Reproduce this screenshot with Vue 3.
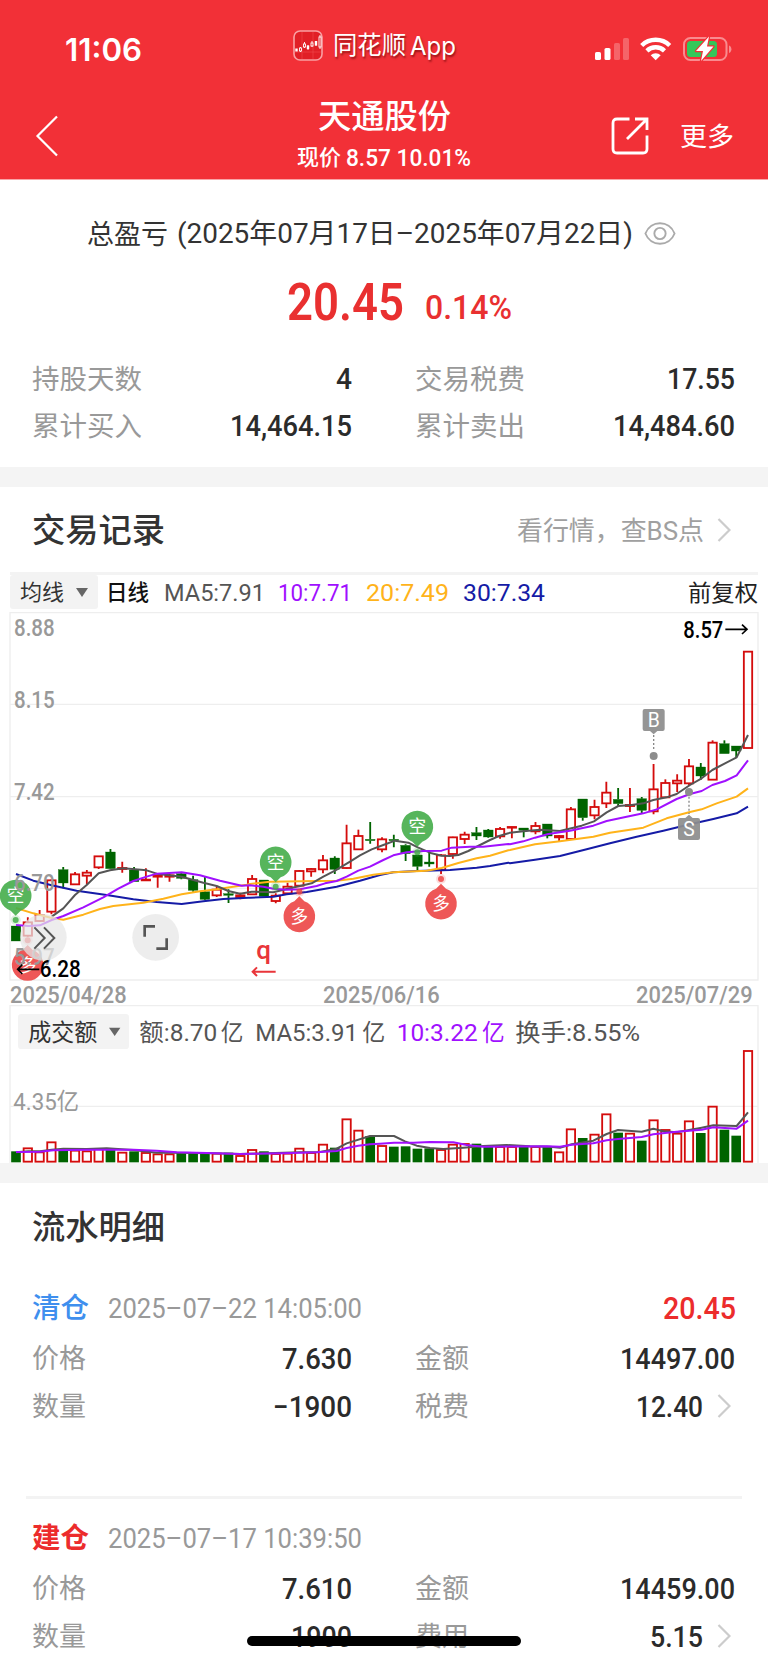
<script setup>
import { h } from 'vue'

// One line of text set to an exact width; its box is one em high.
const Fit = (p) =>
  h('svg', { class: 'fit', width: p.w, height: p.s, style: { overflow: 'visible', display: 'block', flex: 'none' } }, [
    h('text', {
      x: 0, y: p.s * 0.87, 'font-size': p.s, 'font-weight': p.b || 400, fill: 'currentColor',
      textLength: p.w, lengthAdjust: 'spacingAndGlyphs'
    }, p.t)
  ])
Fit.props = ['t', 'w', 's', 'b']

// Price bars: [up, high, bodyTop, bodyBottom, low], three units per pixel.
const early = [
  [0, 438, 438, 483, 483], [1, 412, 427, 467, 470], [1, 390, 405, 423, 425], [1, 298, 301, 395, 403],
  [0, 261, 269, 309, 325], [1, 276, 283, 313, 313], [1, 270, 278, 287, 312], [1, 229, 229, 262, 267],
  [0, 207, 216, 266, 268], [1, 245, 264, 267, 278], [0, 261, 270, 305, 305], [1, 265, 299, 301, 303],
  [1, 286, 287, 290, 323], [1, 281, 286, 290, 305], [0, 278, 281, 295, 298], [0, 287, 299, 331, 335],
  [0, 290, 335, 358, 360], [1, 320, 329, 346, 351], [0, 328, 341, 346, 369], [1, 338, 346, 351, 358],
  [1, 285, 297, 343, 343], [0, 300, 300, 349, 349], [1, 340, 347, 363, 370], [1, 308, 320, 340, 343],
  [1, 270, 273, 317, 320], [1, 265, 267, 274, 290], [1, 225, 241, 268, 280], [0, 229, 234, 268, 282],
  [1, 134, 190, 264, 266], [1, 149, 168, 208, 208], [0, 126, 178, 182, 191], [1, 172, 178, 208, 217],
  [0, 164, 178, 182, 202], [0, 193, 196, 221, 243], [0, 225, 225, 259, 270], [0, 213, 246, 252, 260],
  [1, 222, 226, 270, 282], [1, 170, 172, 222, 236], [1, 155, 164, 177, 192], [0, 141, 158, 168, 180],
  [0, 147, 150, 171, 173], [1, 141, 147, 169, 176]
].map(([u, ...v]) => [u, ...v.map((n) => n + 510)])
const late = [
  [1, 650, 651, 653, 685], [0, 654, 654, 661, 682], [1, 636, 648, 664, 673], [0, 642, 642, 678, 685],
  [1, 675, 678, 682, 693], [1, 591, 598, 687, 687], [0, 567, 567, 623, 632], [1, 569, 591, 616, 628],
  [1, 515, 548, 580, 594], [0, 534, 568, 581, 588], [1, 534, 585, 588, 606], [0, 561, 566, 601, 612],
  [1, 462, 538, 604, 613], [1, 508, 519, 562, 562], [1, 493, 512, 520, 546], [1, 447, 469, 520, 526],
  [0, 459, 471, 498, 509], [1, 391, 398, 509, 509], [0, 391, 401, 431, 431], [0, 408, 408, 423, 442],
  [1, 124, 125, 414, 414]
]
const barX = (i) => 48 + i * 35.42
const candles = [...early, ...late].map(([up, hi, top, bot, lo], i) => ({ up, hi, top, bot, lo, x: barX(i) }))

const turnover = [
  514, 505, 517, 487, 513, 512, 514, 507, 507, 518, 514, 519, 523, 523, 518, 518, 518, 521, 518, 528, 510,
  514, 522, 521, 506, 519, 494, 503, 418, 452, 468, 498, 500, 499, 506, 505, 510, 494, 492, 491, 501, 501,
  501, 501, 501, 501, 517, 448, 474, 464, 403, 458, 461, 482, 421, 450, 461, 424, 459, 380, 449, 467, 213
].map((y, i) => ({ y: y + 1110, x: barX(i), up: candles[i].up }))

const join = (...parts) =>
  'M' + parts.flatMap(([dx, dy, ...xy]) => {
    const out = []
    for (let i = 0; i < xy.length; i += 2) out.push(`${xy[i] + dx},${xy[i + 1] + dy}`)
    return out
  }).join('L')

const lines = [
  { c: '#151ba6', d: join(
    [0, 510, 48, 282, 100, 302, 155, 316, 230, 332, 320, 345, 400, 358, 470, 366, 545, 372, 610, 364, 670, 357, 745, 353],
    [750, 510, 0, 353, 70, 350, 110, 343, 170, 336, 260, 320, 330, 302, 390, 285, 430, 277, 500, 273, 600, 270, 680, 263, 720, 258, 775, 248],
    [1530, 0, 0, 760, 75, 749, 150, 738, 230, 718, 300, 700, 380, 680, 460, 662, 540, 643, 610, 627, 680, 610, 714, 590]) },
  { c: '#ffb31a', d: join(
    [0, 510, 48, 384, 100, 400, 155, 414, 190, 419, 250, 404, 300, 387, 340, 378, 430, 368, 490, 356, 545, 343, 600, 334, 650, 328, 740, 314],
    [750, 510, 0, 312, 60, 305, 150, 304, 260, 302, 310, 296, 370, 284, 430, 277, 530, 272, 575, 264, 625, 249, 680, 235, 720, 227, 775, 211],
    [1530, 0, 0, 720, 75, 703, 150, 694, 250, 680, 300, 668, 400, 653, 470, 625, 540, 606, 575, 598, 620, 580, 680, 560, 714, 535]) },
  { c: '#555', d: join(
    [0, 510, 155, 410, 190, 385, 225, 345, 260, 315, 296, 280, 330, 271, 370, 265, 440, 271, 470, 281, 545, 290, 610, 308, 650, 318, 685, 333, 720, 341],
    [750, 510, 5, 335, 70, 337, 110, 327, 150, 318, 185, 310, 220, 290, 255, 272, 300, 245, 330, 226, 365, 208, 400, 195, 435, 182, 475, 188, 505, 203, 545, 220, 575, 227, 600, 228, 625, 225, 655, 213, 690, 195, 720, 180, 750, 167, 775, 160],
    [1530, 0, 0, 668, 40, 664, 90, 659, 150, 663, 215, 647, 252, 634, 290, 607, 325, 588, 365, 585, 400, 580, 430, 570, 470, 562, 500, 552, 540, 525, 575, 505, 607, 480, 645, 460, 680, 442, 714, 375]) },
  { c: '#a010ff', d: join(
    [0, 510, 48, 435, 85, 438, 120, 436, 155, 420, 190, 408, 250, 382, 310, 352, 355, 326, 400, 303, 440, 290, 470, 281, 545, 277, 600, 286, 660, 302, 725, 317],
    [750, 510, 0, 316, 40, 320, 70, 326, 110, 329, 150, 328, 200, 318, 225, 310, 260, 303, 290, 290, 325, 272, 360, 260, 400, 240, 430, 226, 470, 217, 520, 213, 575, 212, 605, 203, 660, 200, 700, 200, 775, 192],
    [1530, 0, 0, 703, 40, 694, 75, 683, 115, 672, 180, 662, 250, 647, 290, 633, 350, 620, 400, 610, 440, 598, 500, 567, 540, 552, 575, 543, 607, 525, 645, 513, 680, 496, 714, 451]) },
  { c: '#555', d: join(
    [0, 1110, 48, 517, 85, 514, 120, 514, 155, 509, 190, 506, 260, 507, 320, 505, 400, 510, 470, 518, 520, 518, 640, 520, 720, 522, 800, 520, 900, 517, 960, 516, 1010, 506, 1040, 490, 1110, 468],
    [1140, 1110, 0, 468, 42, 468, 75, 484, 110, 497, 150, 504, 190, 507, 250, 503, 310, 498, 380, 495, 450, 499, 510, 500, 540, 503, 575, 493, 640, 482, 680, 462, 714, 450, 785, 455, 820, 446, 850, 454, 890, 457, 965, 443, 1000, 436, 1070, 438, 1104, 397]) },
  { c: '#a010ff', d: join(
    [0, 1110, 48, 516, 120, 515, 160, 511, 260, 509, 400, 509, 470, 512, 530, 517, 620, 519, 720, 522, 850, 520, 950, 517, 1010, 513, 1040, 504, 1075, 497, 1110, 493],
    [1140, 1110, 0, 491, 42, 488, 100, 488, 150, 486, 220, 487, 260, 495, 310, 500, 500, 499, 540, 500, 575, 494, 640, 490, 680, 481, 714, 477, 785, 471, 820, 463, 890, 455, 965, 449, 1000, 442, 1070, 446, 1104, 422]) }
]

const pins = [
  { t: '空', x: 47, y: 857, dot: 930 }, { t: '空', x: 827, y: 757, dot: 830 }, { t: '空', x: 1252, y: 650, dot: 727 },
  { t: '多', x: 83, y: 1065, dot: 991 }, { t: '多', x: 898, y: 919, dot: 845 }, { t: '多', x: 1323, y: 881, dot: 807 }
]

// Labels inside the chart: text, x, baseline, width, size, colour, weight
const labels = [
  ['8.88', 42, 78, 122, 72, '#999', 500], ['8.15', 42, 294, 122, 72, '#999', 500], ['7.42', 42, 569, 122, 72, '#999', 500],
  ['6.70', 42, 843, 122, 72, '#999', 500], ['5.97', 42, 1064, 122, 72, '#999', 500],
  ['8.57', 2050, 83, 120, 72, '#000', 500],
  ['2025/04/28', 30, 1180, 350, 70, '#999', 500], ['2025/06/16', 969, 1180, 350, 70, '#999', 500], ['2025/07/29', 1908, 1180, 350, 70, '#999', 500],
  ['成交额', 85, 1294, 207, 70, '#333'], ['额:8.70', 418, 1294, 234, 72, '#555'], ['亿', 662, 1294, 68, 70, '#555'],
  ['MA5:3.91', 766, 1294, 308, 72, '#555'], ['亿', 1087, 1294, 69, 70, '#555'],
  ['10:3.22', 1190, 1294, 243, 72, '#a010ff'], ['亿', 1446, 1294, 68, 70, '#a010ff'],
  ['换手:8.55%', 1546, 1294, 374, 72, '#555'], ['4.35亿', 40, 1500, 197, 72, '#999']
]

const entries = [
  { kind: '清仓', cls: 'blue', b: 500, time: '2025-07-22 14:05:00', pnl: '20.45', price: '7.630', amount: '14497.00', aw: 115, qty: '−1900', qw: 79, feeName: '税费', fee: '12.40', fw: 67 },
  { kind: '建仓', cls: 'red', b: 700, time: '2025-07-17 10:39:50', pnl: '', price: '7.610', amount: '14459.00', aw: 115, qty: '1900', qw: 61, feeName: '费用', fee: '5.15', fw: 53 }
]
</script>

<template>
  <main class="screen">
    <header class="top">
      <div class="status">
        <Fit class="time" t="11:06" :w="77" :s="31" :b="600" />
        <div class="app">
          <svg class="appicon" width="30" height="31" viewBox="0 0 30 31">
            <rect x="1" y="1" width="28" height="29" rx="6" fill="#e11f26" stroke="#f9a0a3" stroke-width="1.6" />
            <path d="M9 2V29M20 2V29M2 22H28" stroke="#f04a4e" stroke-width=".6" />
            <g stroke="#fff" stroke-width=".9" fill="none">
              <path d="M7.500 17v1M7.500 21v1M11.500 12v2M11.500 17v1M15 15v5M19 11v2M19 16v1M23 11v5M27 5v2M27 17v2" />
              <path d="M3.500 18.500v3M15 15.500v3.500M23 11v4.500" stroke-width="2.400" />
              <rect x="6.500" y="18" width="2" height="3" /><rect x="10.500" y="14" width="2" height="3" /><rect x="18" y="13" width="2" height="3" /><rect x="26" y="7" width="2" height="10" />
            </g>
          </svg>
          <Fit t="同花顺" :w="73" :s="24.5" />
          <Fit t="App" :w="46" :s="25" />
        </div>
        <svg class="sys" width="138" height="28" viewBox="594 35 138 28">
          <g fill="#fff"><rect x="595" y="52" width="6" height="8" rx="1.6" /><rect x="604.500" y="48" width="6" height="12" rx="1.6" /><rect x="614" y="43" width="6" height="17" rx="1.6" opacity=".25" /><rect x="623" y="38" width="6" height="22" rx="1.600" opacity=".25" /></g>
          <g fill="none" stroke="#fff" stroke-width="4.400"><path d="M641.700 45.500a20 20 0 0 1 28 0" /><path d="M646.900 50.900a12.600 12.600 0 0 1 17.600 0" /></g>
          <path d="M650.700 55.300a7.200 7.200 0 0 1 10 0l-5 4.900z" fill="#fff" />
          <rect x="684" y="38" width="42.500" height="22" rx="6.500" fill="none" stroke="#f98b8f" stroke-width="2" />
          <path d="M729 45.500c3.200 1 3.200 6.500 0 7.500z" fill="#f98b8f" />
          <rect x="687" y="41" width="30" height="16" rx="3.500" fill="#34c759" />
          <path d="M709 36.500l-13 14.500h7l-2 10 12.500-14.500h-6.500z" fill="#fff" stroke="#f23037" stroke-width="2.400" paint-order="stroke" stroke-linejoin="round" />
        </svg>
      </div>
      <div class="nav">
        <svg width="24" height="42" viewBox="0 0 24 42"><path d="M22 1.500L2.500 21 22 40.500" fill="none" stroke="#fff" stroke-width="2.200" /></svg>
        <div class="title">
          <Fit t="天通股份" :w="133" :s="33" :b="500" />
          <div class="quote"><Fit t="现价" :w="44" :s="22" :b="500" /><Fit t="8.57 10.01%" :w="125" :s="24" :b="500" /></div>
        </div>
        <div class="acts">
          <svg width="38" height="38" viewBox="0 0 38 38"><path d="M18.500 2H6Q2 2 2 6v26q0 4 4 4h26q4 0 4-4V18.500M24 2h12v11M36 2L16 22" fill="none" stroke="#fff" stroke-width="2.800" /></svg>
          <Fit t="更多" :w="54" :s="26.500" />
        </div>
      </div>
    </header>

    <section class="summary">
      <div class="period">
        <Fit t="总盈亏" :w="81" :s="27" /><Fit t="(2025年07月17日–2025年07月22日)" :w="456" :s="27.500" />
        <svg class="eye" width="32" height="25" viewBox="0 0 34 26" fill="none" stroke="#aaa" stroke-width="2"><path d="M1.500 13C7-1.500 27-1.500 32.500 13 27 27.500 7 27.500 1.500 13z" /><circle cx="17" cy="13" r="6" /></svg>
      </div>
      <div class="profit"><Fit t="20.45" :w="117" :s="51" :b="600" /><Fit t="0.14%" :w="87" :s="33" :b="500" /></div>
      <div class="stats">
        <div class="cell"><Fit t="持股天数" :w="110" :s="27" /><Fit class="val" t="4" :w="16" :s="29" :b="500" /></div>
        <div class="cell"><Fit t="交易税费" :w="110" :s="27" /><Fit class="val" t="17.55" :w="68" :s="29" :b="500" /></div>
        <div class="cell"><Fit t="累计买入" :w="110" :s="27" /><Fit class="val" t="14,464.15" :w="122" :s="29" :b="500" /></div>
        <div class="cell"><Fit t="累计卖出" :w="110" :s="27" /><Fit class="val" t="14,484.60" :w="122" :s="29" :b="500" /></div>
      </div>
    </section>

    <section class="records">
      <div class="head">
        <Fit t="交易记录" :w="133" :s="33" :b="500" />
        <div class="more"><Fit t="看行情，查BS点" :w="187" :s="26" /><svg width="14" height="24" viewBox="0 0 14 24"><path d="M1.500 1l11 11-11 11" fill="none" stroke="#ccc" stroke-width="2.200" /></svg></div>
      </div>
      <div class="tools">
        <span class="pick"><Fit t="均线" :w="44" :s="22" /><i class="tri"></i></span>
        <Fit class="black" t="日线" :w="43" :s="22" :b="500" />
        <Fit class="m5" t="MA5:7.91" :w="101" :s="24" />
        <Fit class="m10" t="10:7.71" :w="74" :s="24" />
        <Fit class="m20" t="20:7.49" :w="83" :s="24" />
        <Fit class="m30" t="30:7.34" :w="82" :s="24" />
        <Fit class="adj" t="前复权" :w="70" :s="23" />
      </div>
      <svg class="chart" width="768" height="553" viewBox="0 0 2304 1659">
        <g fill="none" stroke="#eee" stroke-width="4">
          <path d="M30 8H2274V1110H30zM30 283H2274M30 560H2274M30 835H2274" />
          <path d="M30 1659V1187H2274V1659M30 1489H2274" />
        </g>
        <rect x="54" y="1212" width="333" height="105" rx="10" fill="#f3f3f3" />
        <path d="M327 1253h34l-17 25z" fill="#666" />
        <g v-for="(k, i) in candles" :key="'k' + i" :stroke="k.up ? '#d40c0c' : '#006400'" stroke-width="5.500" fill="none">
          <path :d="`M${k.x} ${k.hi}V${k.top}M${k.x} ${k.bot}V${k.lo}`" />
          <rect :x="k.x - (k.up ? 12.500 : 14.500)" :y="k.top" :width="k.up ? 25 : 29" :height="k.bot - k.top" :class="{ solid: !k.up }" :stroke-width="k.up ? 5.500 : 1" />
        </g>
        <g v-for="(v, i) in turnover" :key="'v' + i">
          <rect v-if="v.up" :x="v.x - 12.500" :y="v.y" width="25" :height="1655 - v.y" fill="none" stroke="#d40c0c" stroke-width="5.500" />
          <rect v-else :x="v.x - 14.500" :y="v.y" width="29" :height="1657 - v.y" fill="#006400" />
        </g>
        <path v-for="(m, i) in lines" :key="'m' + i" :d="m.d" :stroke="m.c" stroke-width="6" fill="none" stroke-linejoin="round" />
        <g v-for="(p, i) in pins" :key="'p' + i" :fill="p.t === '空' ? '#45ad4a' : '#ec4545'">
          <path :transform="`translate(${p.x} ${p.y})${p.t === '空' ? '' : ' rotate(180)'}`" d="M-15 45L0 60 15 45A47.500 47.500 0 1 0-15 45z" opacity=".9" />
          <circle :cx="p.x" :cy="p.dot" r="15" opacity=".18" /><circle :cx="p.x" :cy="p.dot" r="9" opacity=".85" />
          <text :x="p.x" :y="p.y + 20" font-size="53" fill="#fff" text-anchor="middle">{{ p.t }}</text>
        </g>
        <text v-for="(l, i) in labels" :key="'l' + i" :x="l[1]" :y="l[2]" :textLength="l[3]" lengthAdjust="spacingAndGlyphs" :font-size="l[4]" :fill="l[5]" :font-weight="l[6] || 400">{{ l[0] }}</text>
        <g fill="#e7e7e7" opacity=".72"><circle cx="130" cy="982" r="70" /><circle cx="467" cy="982" r="70" /></g>
        <g fill="none" stroke="#555" stroke-width="6"><path d="M103 952l31 32-31 32M132 952l31 32-31 32" /><path d="M434 980V949h31M500 985v31h-31" stroke-width="8" /></g>
        <g fill="none" stroke="#000" stroke-width="5"><path d="M118 1078H54M67 1064l-14 14 14 14M2176 58h64M2226 44l15 14-15 14" /></g>
        <text x="119" y="1102" textLength="123" lengthAdjust="spacingAndGlyphs" font-size="72" font-weight="500">6.28</text>
        <text x="769" y="1047" font-size="78" fill="#e9353a" font-weight="500">q</text>
        <path d="M827 1085H758M771 1072l-13 13 13 13" fill="none" stroke="#e9353a" stroke-width="6" />
        <g fill="#8d8d8d">
          <path d="M1934 297h54q6 0 6 6v54q0 6-6 6h-16l-11 10-11-10h-16q-6 0-6-6v-54q0-6 6-6zM2040 624h16l11-10 11 10h16q6 0 6 6v54q0 6-6 6h-54q-6 0-6-6v-54q0-6 6-6z" opacity=".93" />
          <circle cx="1961" cy="438" r="12" /><circle cx="2067" cy="546" r="12" />
          <path d="M1961 375V420M2067 560V612" stroke="#888" stroke-width="4" stroke-dasharray="6 6" />
        </g>
        <g fill="#fff" font-size="58" text-anchor="middle"><text x="1961" y="351">B</text><text x="2067" y="677">S</text></g>
      </svg>
    </section>

    <section class="ledger">
      <Fit class="heading" t="流水明细" :w="133" :s="33" :b="500" />
      <article v-for="e in entries" :key="e.time" class="entry">
        <div class="line">
          <Fit :class="e.cls" :t="e.kind" :w="57" :s="28.500" :b="e.b" />
          <Fit class="when" :t="e.time.replaceAll('-', '–')" :w="254" :s="27" />
          <Fit v-if="e.pnl" class="red pnl" :t="e.pnl" :w="73" :s="31" :b="500" />
        </div>
        <div class="grid">
          <div class="cell"><Fit t="价格" :w="54" :s="27" /><Fit class="val" :t="e.price" :w="70" :s="29.500" :b="500" /></div>
          <div class="cell"><Fit t="金额" :w="54" :s="27" /><Fit class="val" :t="e.amount" :w="e.aw" :s="29.500" :b="500" /></div>
          <div class="cell"><Fit t="数量" :w="54" :s="27" /><Fit class="val" :t="e.qty" :w="e.qw" :s="29.500" :b="500" /></div>
          <div class="cell"><Fit :t="e.feeName" :w="54" :s="27" /><Fit class="val" :t="e.fee" :w="e.fw" :s="29.500" :b="500" /><svg class="arrow" width="14" height="24" viewBox="0 0 14 24"><path d="M1.500 1l11 11-11 11" fill="none" stroke="#ccc" stroke-width="2.200" /></svg></div>
        </div>
      </article>
    </section>
    <div class="home"></div>
  </main>
</template>

<style>
body { margin: 0; background: #fff; }
</style>

<style scoped>
.screen { position: relative; width: 768px; height: 1663px; overflow: hidden; background: #fff; font-family: Roboto, "Noto Sans CJK SC", sans-serif; color: #999; }
.screen text { font-family: inherit; }
.top { height: 180px; background: #f23037; color: #fff; border-bottom: 1px solid #f9a5a8; box-sizing: border-box; }
.status { height: 98px; display: grid; grid-template-columns: 293px 1fr 174px; align-items: center; }
.time { margin-left: 65px; font-family: Inter, sans-serif; }
.app { display: flex; align-items: center; margin-top: -8px; text-shadow: 1px 2px 2px rgba(90, 0, 0, .6); }
.appicon { margin-right: 10px; }
.app .fit + .fit { margin-left: 4px; font-family: Inter, sans-serif; }
.nav { height: 80px; display: grid; grid-template-columns: 260px 248px 260px; align-items: start; }
.nav > svg { margin: 17px 0 0 35px; }
.title { display: flex; flex-direction: column; align-items: center; gap: 13px; padding-top: 1px; }
.quote { display: flex; align-items: center; gap: 5px; }
.acts { display: flex; align-items: center; gap: 31px; margin: 19px 0 0 103px; }
.summary { height: 287px; color: #999; border-bottom: 20px solid #f4f4f4; }
.period { display: flex; align-items: center; height: 106px; padding-left: 87px; color: #333; gap: 9px; }
.eye { margin-left: 2px; }
.profit { display: flex; align-items: baseline; gap: 21px; height: 51px; margin-top: -10px; padding-left: 287px; color: #e93030; }
.profit .fit + .fit { margin-top: 14px; align-self: flex-start; }
.stats { display: grid; grid-template-columns: 320px 320px; column-gap: 63px; grid-auto-rows: 47.600px; padding: 27.500px 32px 0; }
.cell { display: flex; align-items: center; justify-content: space-between; }
.val { color: #2b2b2b; margin-left: auto; }
.head { display: flex; justify-content: space-between; align-items: center; height: 85px; padding: 0 37px 0 32px; color: #333; }
.more { display: flex; align-items: center; gap: 13px; color: #a0a0a0; }
.tools { display: flex; align-items: center; height: 38px; box-sizing: border-box; border-top: 3px solid #f3f3f3; margin: 0 10px; padding: 0 0 1px; }
.pick { display: flex; align-items: center; width: 88px; height: 34px; box-sizing: border-box; padding-left: 10px; gap: 12px; background: #f3f3f3; border-radius: 3px; color: #333; }
.tri { border: 6px solid transparent; border-top: 9px solid #666; border-bottom: 0; }
.black { margin-left: 8px; color: #111; }
.m5 { margin-left: 15px; color: #555; }
.m10 { margin-left: 13px; color: #a010ff; }
.m20 { margin-left: 14px; color: #ffb31a; }
.m30 { margin-left: 14px; color: #151ba6; }
.adj { margin-left: auto; color: #222; }
.chart { display: block; }
.solid { fill: #006400; }
.ledger { border-top: 20px solid #f4f4f4; }
.heading { margin: 27px 0 0 32px; color: #333; }
.entry { height: 230.500px; margin: 0 26px; padding: 0 6px; box-sizing: border-box; }
.entry + .entry { border-top: 3px solid #f3f3f3; }
.heading + .entry { height: 253px; padding-top: 38px; }
.entry + .entry .line { margin-top: 12px; }
.line { display: flex; align-items: center; height: 52px; }
.when { margin-left: 19px; }
.pnl { margin-left: auto; }
.blue { color: #3f8fee; }
.red { color: #ec2c2c; }
.grid { display: grid; grid-template-columns: 320px 320px; column-gap: 63px; grid-auto-rows: 48.500px; }
.arrow { margin-left: 14px; margin-right: 4px; }
.home { position: absolute; left: 247px; top: 1636px; width: 274px; height: 10px; border-radius: 5px; background: #000; }
</style>
